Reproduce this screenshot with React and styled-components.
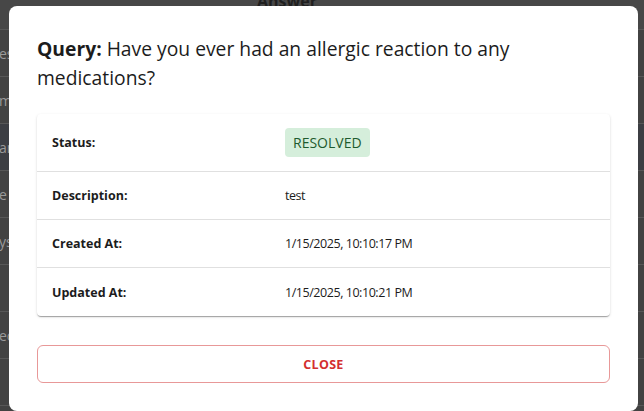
import React from "react"
import styled, { createGlobalStyle } from "styled-components"

const GlobalStyle = createGlobalStyle`
  html, body {
    margin: 0;
    padding: 0;
    width: 100%;
    height: 100%;
    overflow: hidden;
    background: #444444;
    font-family: "Open Sans", "Noto Sans", sans-serif;
  }
`

const rows = [
  { head: "es" },
  { head: "me" },
  { head: "ar", active: true },
  { head: "e" },
  { head: "ys" },
  { head: "" },
  { head: "ec" },
  { head: "" },
  { head: "" },
]

const details = [
  { label: "Status:", status: "RESOLVED" },
  { label: "Description:", value: "test" },
  { label: "Created At:", value: "1/15/2025, 10:10:17 PM" },
  { label: "Updated At:", value: "1/15/2025, 10:10:21 PM" },
]

export default function App() {
  return (
    <>
      <GlobalStyle />
      <Page>
        <HeadRow>
          <HeadCell>Answer</HeadCell>
        </HeadRow>
        {rows.map((r, i) => (
          <BgRow key={i} $active={r.active}>
            <BgCell>{r.head}</BgCell>
          </BgRow>
        ))}
      </Page>

      <Backdrop>
        <Dialog role="dialog">
          <Title>
            <strong>Query:</strong> Have you ever had an allergic reaction to any
            medications?
          </Title>

          <Card>
            {details.map((d) => (
              <Row key={d.label} $tall={!!d.status}>
                <Label>{d.label}</Label>
                <Value>
                  {d.status ? <Chip>{d.status}</Chip> : d.value}
                </Value>
              </Row>
            ))}
          </Card>

          <CloseButton type="button">CLOSE</CloseButton>
        </Dialog>
      </Backdrop>
    </>
  )
}

const Page = styled.div`
  display: flex;
  flex-direction: column;
  margin-top: -17px;
`

const HeadRow = styled.div`
  height: 47px;
  display: flex;
  justify-content: center;
  align-items: flex-start;
  background: #474747;
  border-bottom: 1px solid #575757;
  box-sizing: border-box;
`

const HeadCell = styled.div`
  margin-left: -70px;
  padding-top: 7px;
  font-weight: 700;
  font-size: 16px;
  color: #1f1f1f;
`

const BgRow = styled.div`
  height: 47px;
  display: flex;
  align-items: center;
  background: ${(p) => (p.$active ? "#3c3e43" : "#424242")};
  border-bottom: 1px solid #575757;
  box-sizing: border-box;
`

const BgCell = styled.div`
  font-size: 14px;
  color: #9a9a9a;
  margin-left: -1px;
`

const Backdrop = styled.div`
  position: fixed;
  inset: 0;
  display: flex;
  justify-content: center;
  align-items: flex-start;
  padding-top: 6px;
`

const Dialog = styled.div`
  width: 629px;
  box-sizing: border-box;
  margin-left: 3px;
  padding: 28px;
  background: #ffffff;
  border-radius: 8px;
  display: flex;
  flex-direction: column;
`

const Title = styled.h2`
  margin: 0 0 22px;
  font-size: 19.3px;
  line-height: 29px;
  font-weight: 400;
  color: #1c1c1c;

  strong {
    font-weight: 700;
  }
`

const Card = styled.div`
  background: #fff;
  border-radius: 4px;
  box-shadow: 0 2px 1px -1px rgba(0, 0, 0, 0.2), 0 1px 1px 0 rgba(0, 0, 0, 0.14),
    0 1px 3px 0 rgba(0, 0, 0, 0.12);
  display: flex;
  flex-direction: column;
`

const Row = styled.div`
  display: grid;
  grid-template-columns: 248px 1fr;
  align-items: center;
  height: ${(p) => (p.$tall ? "58px" : "48px")};
  box-sizing: border-box;
  border-bottom: 1px solid #e0e0e0;

  &:last-child {
    border-bottom: none;
  }
`

const Label = styled.div`
  padding-left: 15px;
  font-size: 12.5px;
  font-weight: 700;
  color: #1c1c1c;
`

const Value = styled.div`
  font-size: 12.5px;
  letter-spacing: -0.45px;
  color: #1c1c1c;
`

const Chip = styled.span`
  display: inline-flex;
  align-items: center;
  height: 29px;
  padding: 0 8px;
  border-radius: 4px;
  background: #d5eedb;
  color: #1e5b2e;
  font-size: 14px;
  letter-spacing: 0;
`

const CloseButton = styled.button`
  margin-top: 29px;
  height: 38px;
  flex-shrink: 0;
  border: 1px solid #e89898;
  border-radius: 6px;
  background: #fff;
  color: #d32f2f;
  font-family: inherit;
  font-size: 12.5px;
  font-weight: 700;
  letter-spacing: 0.3px;
  cursor: pointer;
`
